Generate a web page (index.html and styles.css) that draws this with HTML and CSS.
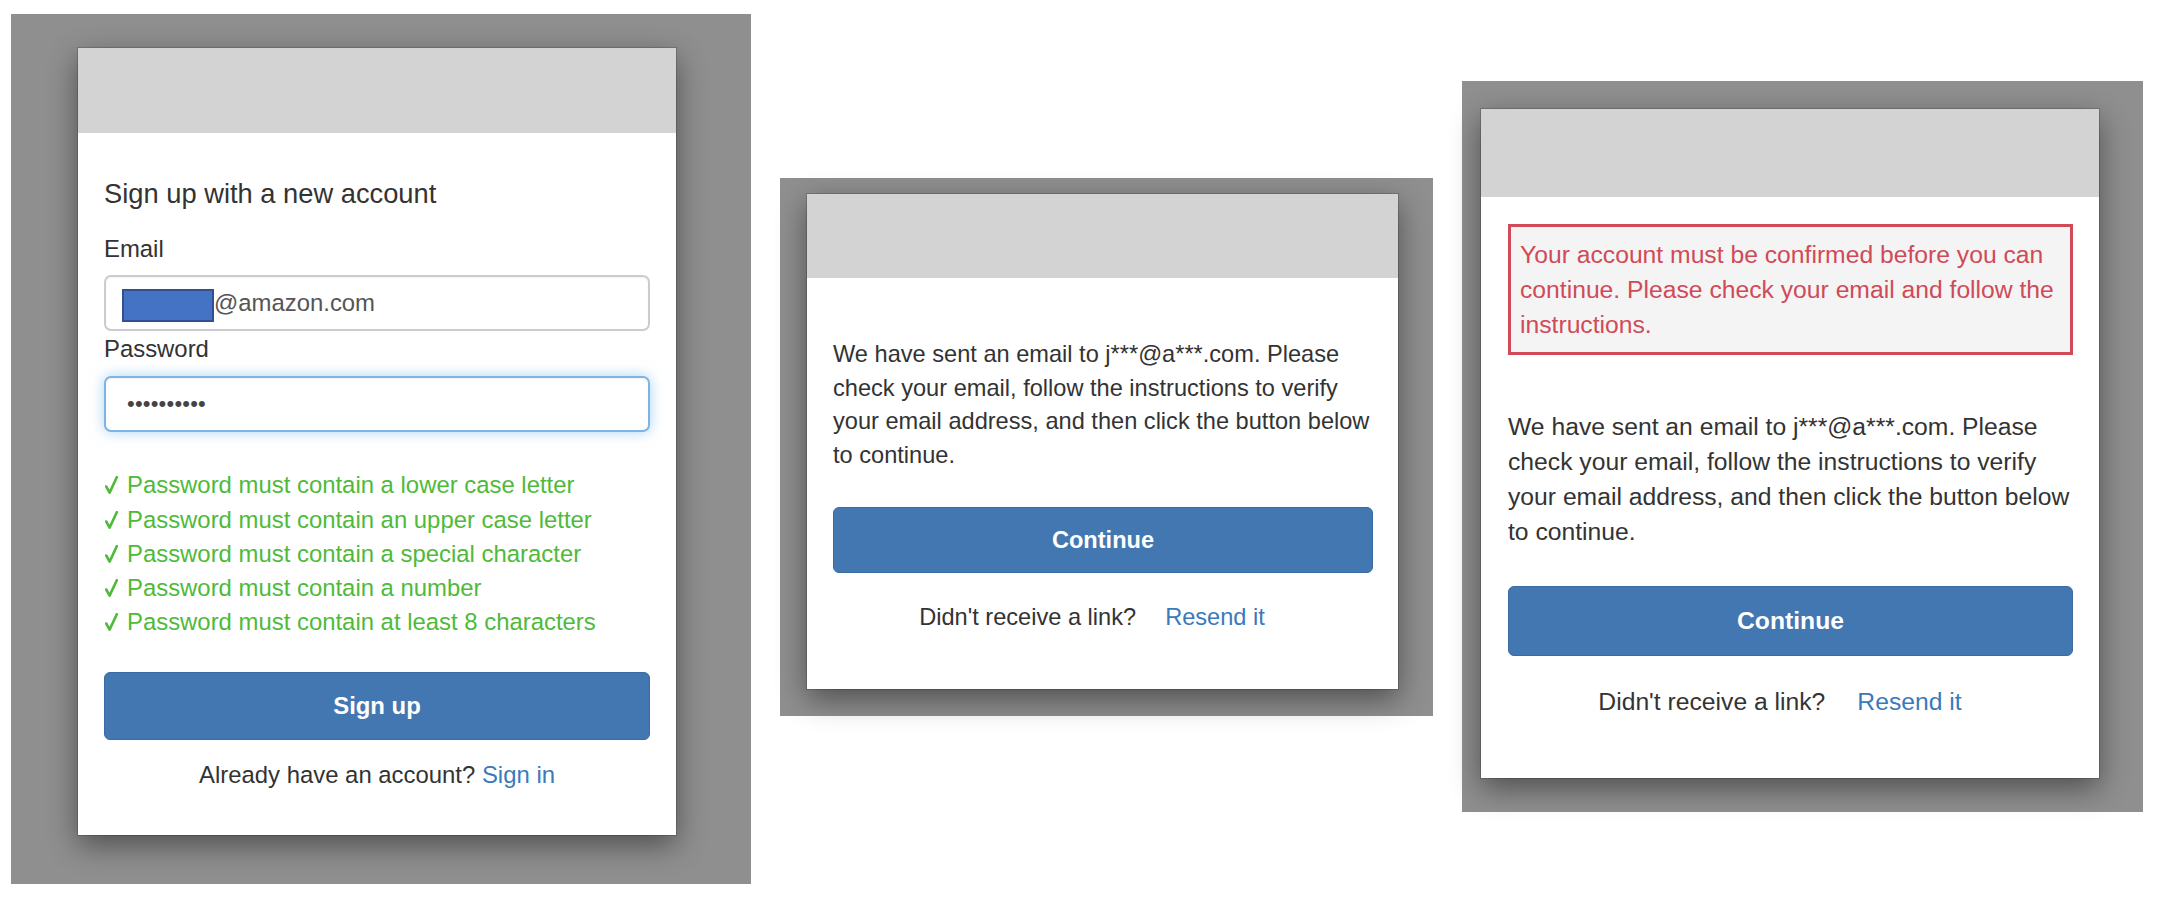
FILE: index.html
```html
<!DOCTYPE html>
<html lang="en">
<head>
<meta charset="utf-8">
<title>Cognito hosted UI screens</title>
<link rel="stylesheet" href="styles.css">
</head>
<body>
<div class="stage">
  <section class="panel panel-signup">
    <div class="card card-signup">
      <div class="banner"></div>
      <div class="card-body">
        <h2 class="title">Sign up with a new account</h2>
        <div class="label label-email">Email</div>
        <div class="field field-email"><span class="redact"></span><span>@amazon.com</span></div>
        <div class="label label-password">Password</div>
        <div class="field field-password">••••••••••</div>
        <ul class="checks">
          <li><svg class="tick" viewBox="0 0 13 18"><path d="M1.2 10.5 L4.6 16.6 L11.8 1.2"/></svg>Password must contain a lower case letter</li>
          <li><svg class="tick" viewBox="0 0 13 18"><path d="M1.2 10.5 L4.6 16.6 L11.8 1.2"/></svg>Password must contain an upper case letter</li>
          <li><svg class="tick" viewBox="0 0 13 18"><path d="M1.2 10.5 L4.6 16.6 L11.8 1.2"/></svg>Password must contain a special character</li>
          <li><svg class="tick" viewBox="0 0 13 18"><path d="M1.2 10.5 L4.6 16.6 L11.8 1.2"/></svg>Password must contain a number</li>
          <li><svg class="tick" viewBox="0 0 13 18"><path d="M1.2 10.5 L4.6 16.6 L11.8 1.2"/></svg>Password must contain at least 8 characters</li>
        </ul>
        <button class="btn btn-signup">Sign up</button>
        <p class="redirect">Already have an account? <a class="link">Sign in</a></p>
      </div>
    </div>
  </section>

  <section class="panel panel-sent">
    <div class="card card-sent">
      <div class="banner"></div>
      <div class="card-body">
        <p class="message">We have sent an email to j***@a***.com. Please check your email, follow the instructions to verify your email address, and then click the button below to continue.</p>
        <button class="btn btn-continue">Continue</button>
        <p class="resend"><span>Didn't receive a link?</span><a class="link">Resend it</a></p>
      </div>
    </div>
  </section>

  <section class="panel panel-error">
    <div class="card card-error">
      <div class="banner"></div>
      <div class="card-body">
        <div class="error">Your account must be confirmed before you can continue. Please check your email and follow the instructions.</div>
        <p class="message">We have sent an email to j***@a***.com. Please check your email, follow the instructions to verify your email address, and then click the button below to continue.</p>
        <button class="btn btn-continue">Continue</button>
        <p class="resend"><span>Didn't receive a link?</span><a class="link">Resend it</a></p>
      </div>
    </div>
  </section>
</div>
</body>
</html>
```

FILE: styles.css
```css
* { box-sizing: border-box; }

body {
  margin: 0;
  background: #ffffff;
  font-family: "Liberation Sans", Arial, Helvetica, sans-serif;
  color: #333333;
}

.stage {
  display: flex;
  align-items: flex-start;
  gap: 29px;
  padding-left: 11px;
}

.panel { background: #8f8f8f; }
.panel-signup { margin-top: 14px; padding: 34px 75px 49px 67px; }
.panel-sent { margin-top: 178px; padding: 16px 35px 27px 27px; }
.panel-error { margin-top: 81px; padding: 28px 44px 34px 19px; }

.card {
  background: #ffffff;
  box-shadow: 0 0 0 1px rgba(0, 0, 0, 0.16), 0 10px 28px rgba(0, 0, 0, 0.45);
}
.card-signup { width: 598px; font-size: 23.9px; line-height: 34.2px; }
.card-sent { width: 591px; font-size: 23.6px; line-height: 33.5px; }
.card-error { width: 618px; font-size: 24.7px; line-height: 35px; }

.banner { background: #d3d3d3; }
.card-signup .banner { height: 85px; }
.card-sent .banner { height: 84px; }
.card-error .banner { height: 88px; }

.card-body { padding: 0 26px; }
.card-signup .card-body { padding-bottom: 42px; }
.card-sent .card-body { padding: 0 25px 54px 26px; }
.card-error .card-body { padding: 0 26px 59px 27px; }

/* sign up card */
.title {
  margin: 42px 0 0;
  font-size: 27.3px;
  line-height: 38px;
  font-weight: 400;
  color: #333333;
}
.label { font-weight: 400; }
.label-email { margin-top: 19px; }
.label-password { margin-top: 1px; }

.field {
  display: flex;
  align-items: center;
  height: 56px;
  border: 2px solid #cccccc;
  border-radius: 7px;
  color: #555555;
  background: #ffffff;
  box-shadow: inset 0 1px 2px rgba(0, 0, 0, 0.06);
}
.field-email { margin-top: 9px; padding-left: 16px; }
.field-password {
  margin-top: 10px;
  padding-left: 21px;
  border-color: #7db4e6;
  box-shadow: inset 0 1px 2px rgba(0, 0, 0, 0.06), 0 0 14px rgba(102, 175, 233, 0.55);
  font-size: 22px;
  letter-spacing: 0.2px;
  color: #444444;
}
.redact {
  align-self: flex-end;
  margin-bottom: 7px;
  width: 92px;
  height: 33px;
  background: #4472c4;
  border: 2px solid #2f528f;
}

.checks {
  list-style: none;
  margin: 36px 0 0;
  padding: 0;
  color: #4fba3a;
}
.tick {
  width: 13px;
  height: 18px;
  margin: 0 9px 0 1px;
  vertical-align: -1px;
  fill: none;
  stroke: #4fba3a;
  stroke-width: 2.6;
  stroke-linecap: round;
  stroke-linejoin: round;
}

.btn {
  display: block;
  width: 100%;
  border: 1px solid #3a6ca3;
  border-radius: 6px;
  background: #4377b1;
  color: #ffffff;
  font-family: inherit;
  font-size: inherit;
  font-weight: 700;
  padding: 0;
}
.btn-signup { margin-top: 33px; height: 68px; }
.card-sent .btn-continue { margin-top: 35px; height: 66px; }
.card-error .btn-continue { margin-top: 37px; height: 70px; }

.redirect {
  margin: 18px 0 0;
  text-align: center;
}
.link { color: #3a7abb; text-decoration: none; }

/* confirmation cards */
.message { margin: 0; }
.card-sent .message { margin-top: 60px; }
.card-error .message { margin-top: 54px; }

.error {
  margin-top: 27px;
  border: 3px solid #d04a58;
  background: #f4f4f4;
  color: #d04a58;
  padding: 10px 9px 10px 9px;
}

.resend {
  display: flex;
  justify-content: center;
  margin: 28px 0 0;
}
.card-sent .resend { gap: 29px; padding-right: 22px; }
.card-error .resend { gap: 32px; padding-right: 21px; }
```
